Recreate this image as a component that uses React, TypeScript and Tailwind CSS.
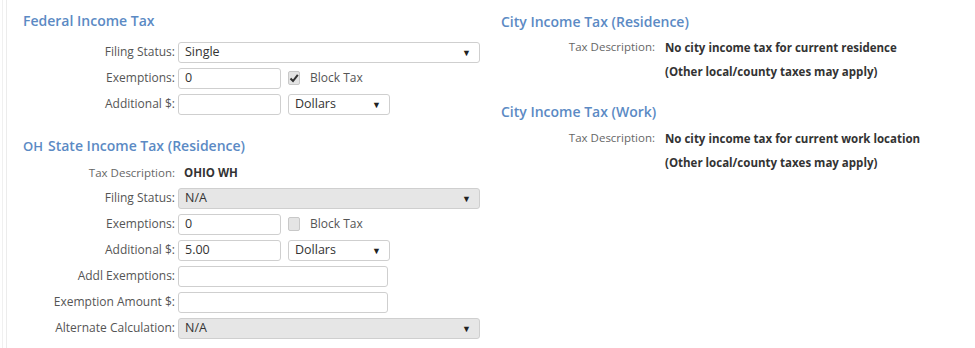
import React from "react";

const font = { fontFamily: '"Open Sans", "Noto Sans", sans-serif' };

function Arrow() {
  return <span className="text-[9px] text-[#222] leading-none">▼</span>;
}

function Select({ value, w, disabled }: { value: string; w: string; disabled?: boolean }) {
  return (
    <div
      className={`${w} h-[21px] flex items-center justify-between pl-[6px] pr-[8px] border border-[#cfcfcf] rounded-[3px] text-[12.5px] text-[#333] ${
        disabled ? "bg-[#e6e6e6]" : "bg-white"
      }`}
    >
      <span>{value}</span>
      <Arrow />
    </div>
  );
}

function Input({ value, w }: { value?: string; w: string }) {
  return (
    <div className={`${w} h-[21px] flex items-center pl-[6px] border border-[#cfcfcf] rounded-[3px] bg-white text-[12.5px] text-[#333]`}>
      {value}
    </div>
  );
}

function Check({ checked }: { checked?: boolean }) {
  return (
    <div className="flex items-center gap-[10px]">
      <div className="w-[12px] h-[14px] rounded-[2px] border border-[#c8c8c8] bg-[#e4e4e4] flex items-center justify-center">
        {checked && (
          <svg width="10" height="10" viewBox="0 0 10 10">
            <path d="M1.5 5.5 L4 8 L8.8 1.8" stroke="#333" strokeWidth="2" fill="none" />
          </svg>
        )}
      </div>
      <span className="text-[12px] text-[#555]">Block Tax</span>
    </div>
  );
}

function Row({ label, children, small, h = "h-[26px]" }: { label: string; children: React.ReactNode; small?: boolean; h?: string }) {
  return (
    <div className={`flex items-center ${h}`}>
      <div className={`w-[155px] text-right pr-[3px] ${small ? "text-[11.5px] text-[#666]" : "text-[12px] text-[#555]"}`}>{label}</div>
      <div className="flex items-center gap-[7px]">{children}</div>
    </div>
  );
}

function DescRow({ lines }: { lines: string[] }) {
  return (
    <div className="flex">
      <div className="w-[154px] text-right text-[11.5px] text-[#666] pt-[1px]">Tax Description:</div>
      <div className="pl-[10px] text-[11.5px] font-bold text-[#333] leading-[24px] -mt-[1px]">
        {lines.map((l) => (
          <div key={l}>{l}</div>
        ))}
      </div>
    </div>
  );
}

export default function App() {
  return (
    <div style={font} className="w-[975px] h-[348px] bg-white overflow-hidden">
      <div className="ml-[2px] border-l border-[#f0f0f0] h-full">
        <div className="ml-[3px] border-l border-[#ececec] h-full flex">
          <div className="w-[494px] pl-[16px] pt-[10px]">
            <div className="text-[14px] font-semibold text-[#5b8ac4] h-[26px]">Federal Income Tax</div>
            <div className="pt-[3px]">
              <Row label="Filing Status:">
                <Select value="Single" w="w-[302px]" />
              </Row>
              <Row label="Exemptions:">
                <Input value="0" w="w-[103px]" />
                <Check checked />
              </Row>
              <Row label="Additional $:">
                <Input w="w-[103px]" />
                <Select value="Dollars" w="w-[102px]" />
              </Row>
            </div>
            <div className="mt-[17px] text-[14px] font-semibold text-[#5b8ac4] h-[26px] flex items-baseline">
              <span className="text-[13px] mt-[3px]">OH</span>
              <span className="ml-[5px]">State Income Tax (Residence)</span>
            </div>
            <Row label="Tax Description:" small h="h-[25px]">
              <span className="text-[11.5px] font-bold text-[#333] pl-[6px]">OHIO WH</span>
            </Row>
            <Row label="Filing Status:">
              <Select value="N/A" w="w-[302px]" disabled />
            </Row>
            <Row label="Exemptions:">
              <Input value="0" w="w-[103px]" />
              <Check />
            </Row>
            <Row label="Additional $:">
              <Input value="5.00" w="w-[103px]" />
              <Select value="Dollars" w="w-[102px]" />
            </Row>
            <Row label="Addl Exemptions:">
              <Input w="w-[210px]" />
            </Row>
            <Row label="Exemption Amount $:">
              <Input w="w-[210px]" />
            </Row>
            <Row label="Alternate Calculation:">
              <Select value="N/A" w="w-[302px]" disabled />
            </Row>
          </div>
          <div className="pt-[11px]">
            <div className="text-[14px] font-semibold text-[#5b8ac4] h-[26px]">City Income Tax (Residence)</div>
            <DescRow lines={["No city income tax for current residence", "(Other local/county taxes may apply)"]} />
            <div className="mt-[17px] text-[14px] font-semibold text-[#5b8ac4] h-[27px]">City Income Tax (Work)</div>
            <DescRow lines={["No city income tax for current work location", "(Other local/county taxes may apply)"]} />
          </div>
        </div>
      </div>
    </div>
  );
}
